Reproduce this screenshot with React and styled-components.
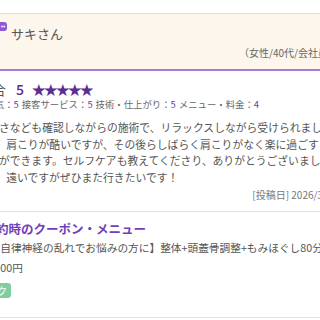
import styled, { createGlobalStyle } from "styled-components";

const GlobalStyle = createGlobalStyle`
  html, body {
    margin: 0;
    padding: 0;
    background: #fff;
    overflow: hidden;
  }
  body {
    font-family: "Noto Sans CJK JP", "Noto Sans", sans-serif;
    color: #555;
  }
`;

const Page = styled.div`
  width: 362px;
  margin-left: -24px;
  padding-top: 13px;
`;

const ReviewHead = styled.div`
  background: #fdf6ec;
  border-top: 1px solid #dedede;
  border-bottom: 2px solid #a47bdc;
  padding: 11px 0 9px 24px;
`;

const NameRow = styled.div`
  display: flex;
  align-items: flex-start;
  gap: 4px;
  font-size: 13px;
  line-height: 18px;
  color: #555;
`;

const Profile = styled.div`
  text-align: right;
  font-size: 10px;
  line-height: 14px;
  color: #666;
  margin-top: 3px;
`;

const Body = styled.div`
  padding-top: 10px;
`;

const Total = styled.div`
  display: flex;
  align-items: center;
  font-size: 14px;
  line-height: 16px;
  height: 16px;
  color: #555;
  padding-left: 2px;
`;

const Score = styled.span`
  color: #5b2c93;
  font-weight: 500;
  margin: 0 8px 0 10px;
`;

const Stars = styled.span`
  color: #5b2c93;
  font-size: 13.5px;
  letter-spacing: -1.5px;
`;

const Detail = styled.div`
  font-size: 9.4px;
  line-height: 12px;
  margin-top: 1px;
  color: #666;
  white-space: nowrap;
`;

const Num = styled.span`
  color: #6a3db0;
  margin-right: 3px;
`;

const Comment = styled.div`
  margin: 9px 0 0 1.4px;
  font-size: 10.8px;
  line-height: 16.5px;
  color: #555;
  white-space: nowrap;
`;

const Line = styled.div`
  margin-left: ${(p) => (p.$shift ? "-3.6px" : "0")};
`;

const Posted = styled.div`
  text-align: right;
  font-size: 10px;
  line-height: 14px;
  color: #777;
  margin-top: 3px;
  padding-bottom: 9px;
  border-bottom: 1px solid #e2e2e2;
`;

const Coupon = styled.div`
  padding: 8px 0 17px 13.5px;
  border-bottom: 1px solid #e2e2e2;
`;

const CouponTitle = styled.div`
  color: #7140b8;
  font-weight: 700;
  font-size: 12.5px;
  line-height: 18px;
  margin-left: -6px;
  white-space: nowrap;
`;

const CouponName = styled.div`
  font-size: 10.7px;
  line-height: 16px;
  margin-top: 2px;
  color: #555;
  white-space: nowrap;
`;

const Price = styled.div`
  font-size: 10.7px;
  line-height: 16px;
  margin: 4px 0 0 -4px;
  color: #555;
`;

const Tag = styled.span`
  display: inline-block;
  margin: 2px 0 0 -16.5px;
  background: #82cd9f;
  color: #fff;
  font-size: 10px;
  line-height: 15px;
  padding: 0 4px;
  border-radius: 3px;
`;

const Bubble = () => (
  <svg width="14" height="12" viewBox="0 0 14 12" style={{ marginLeft: -7, marginTop: -3 }}>
    <path d="M3 0h8a3 3 0 0 1 3 3v3a3 3 0 0 1-3 3H6l-4 3 1-3a3 3 0 0 1-3-3V3a3 3 0 0 1 3-3z" fill="#8e58d6" />
    <circle cx="9" cy="4.5" r="0.9" fill="#fff" />
    <circle cx="11.3" cy="4.5" r="0.9" fill="#fff" />
  </svg>
);

const lines = [
  { text: "の強さなども確認しながらの施術で、リラックスしながら受けられました。", shift: false },
  { text: "した。肩こりが酷いですが、その後らしばらく肩こりがなく楽に過ごすこと", shift: true },
  { text: "ことができます。セルフケアも教えてくださり、ありがとうございました。", shift: false },
  { text: "した。遠いですがぜひまた行きたいです！", shift: true },
];

export default function App() {
  return (
    <>
      <GlobalStyle />
      <Page>
        <ReviewHead>
          <NameRow>
            <Bubble />
            <span>サキさん</span>
          </NameRow>
          <Profile>（女性/40代/会社員）</Profile>
        </ReviewHead>
        <Body>
          <Total>
            総合<Score>5</Score>
            <Stars>★★★★★</Stars>
          </Total>
          <Detail>
            雰囲気：<Num>5</Num>接客サービス：<Num>5</Num>技術・仕上がり：<Num>5</Num>メニュー・料金：<Num>4</Num>
          </Detail>
          <Comment>
            {lines.map((l) => (
              <Line key={l.text} $shift={l.shift}>
                {l.text}
              </Line>
            ))}
          </Comment>
          <Posted>[投稿日] 2026/3/15</Posted>
          <Coupon>
            <CouponTitle>予約時のクーポン・メニュー</CouponTitle>
            <CouponName>【自律神経の乱れでお悩みの方に】整体+頭蓋骨調整+もみほぐし80分</CouponName>
            <Price>4,900円</Price>
            <Tag>ブック</Tag>
          </Coupon>
        </Body>
      </Page>
    </>
  );
}
